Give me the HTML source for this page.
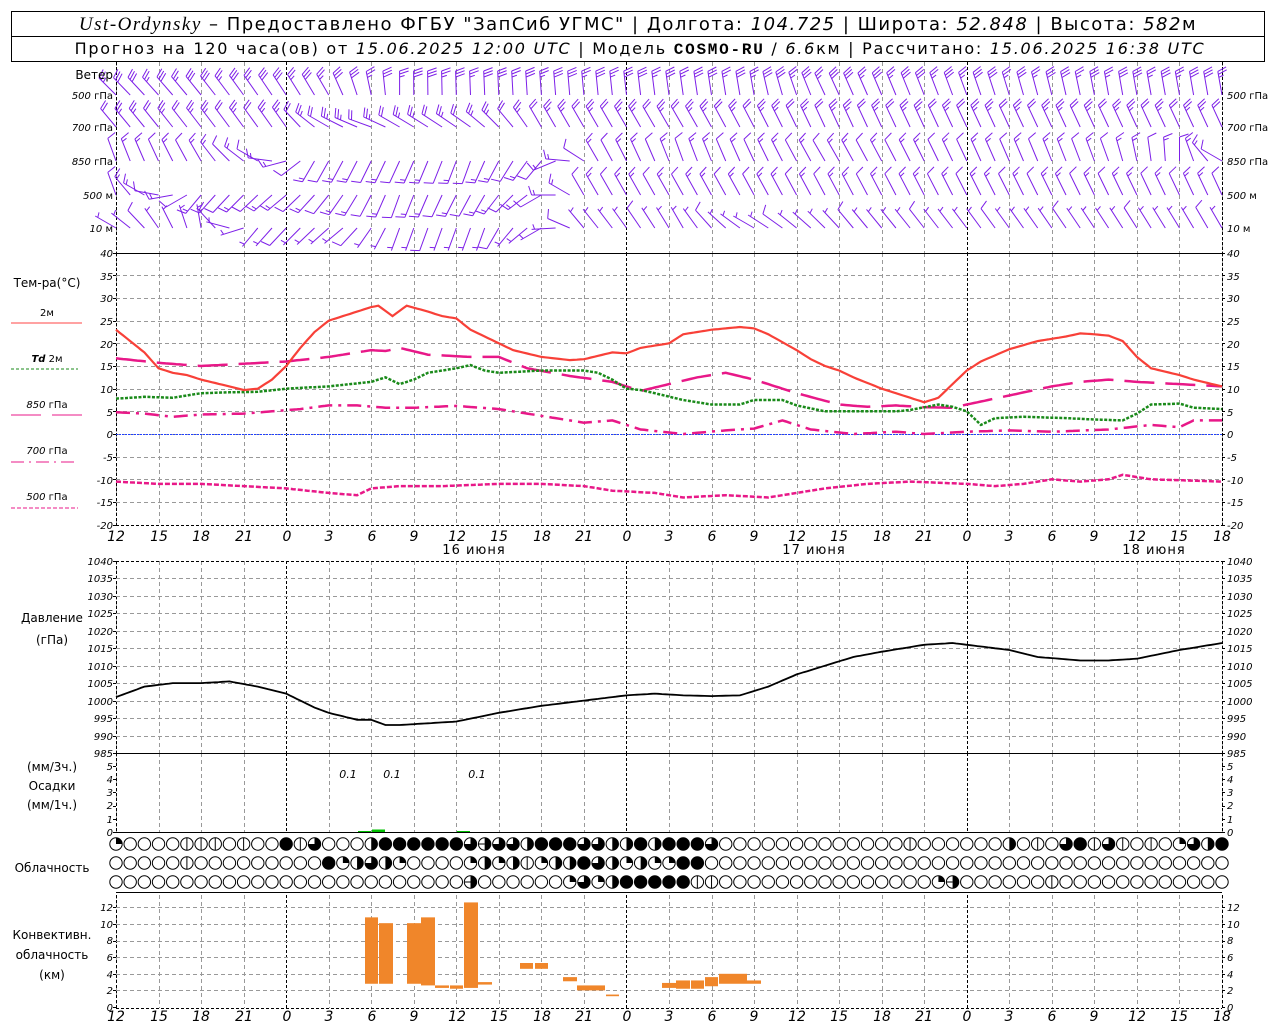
<!DOCTYPE html>
<html><head><meta charset="utf-8">
<style>
html,body{margin:0;padding:0;background:#fff;}
svg{display:block;}
text{font-family:"DejaVu Sans","Liberation Sans",sans-serif;fill:#000;}
.t{font-size:11px;font-style:italic;}
.l{font-size:12px;}
.s{font-size:10px;}
.ax{font-size:14px;font-style:italic;}
</style></head><body>
<svg id="c" width="1280" height="1024" viewBox="0 0 1280 1024" xmlns="http://www.w3.org/2000/svg">
<rect x="0" y="0" width="1280" height="1024" fill="#fff"/>
<!-- header -->
<rect x="11.5" y="11.5" width="1253" height="50" fill="none" stroke="#000"/>
<line x1="11.5" y1="36.5" x2="1264.5" y2="36.5" stroke="#000"/>
<text x="638" y="30" text-anchor="middle" style="font-size:18px;letter-spacing:1.5px"><tspan style="font-family:'Liberation Serif',serif;font-style:italic;font-size:19px">Ust-Ordynsky</tspan> – Предоставлено ФГБУ "ЗапСиб УГМС" | Долгота: <tspan style="font-style:italic">104.725</tspan> | Широта: <tspan style="font-style:italic">52.848</tspan> | Высота: <tspan style="font-style:italic">582</tspan>м</text>
<text x="640" y="54" text-anchor="middle" style="font-size:16px;letter-spacing:1.75px">Прогноз на 120 часа(ов) от <tspan style="font-style:italic">15.06.2025 12:00 UTC</tspan> | Модель <tspan style="font-family:'Liberation Mono',monospace;font-weight:bold">COSMO-RU</tspan> / <tspan style="font-style:italic">6.6</tspan>км | Рассчитано: <tspan style="font-style:italic">15.06.2025 16:38 UTC</tspan></text>

<g id="grid"></g>
<g id="data"></g>

<!-- left labels -->
<g class="l">
<text x="113" y="79" text-anchor="end">Ветер</text>
<text x="113" y="99" text-anchor="end" class="s"><tspan font-style="italic">500</tspan> гПа</text>
<text x="113" y="131" text-anchor="end" class="s"><tspan font-style="italic">700</tspan> гПа</text>
<text x="113" y="165" text-anchor="end" class="s"><tspan font-style="italic">850</tspan> гПа</text>
<text x="113" y="199" text-anchor="end" class="s"><tspan font-style="italic">500</tspan> м</text>
<text x="113" y="232" text-anchor="end" class="s"><tspan font-style="italic">10</tspan>   м</text>
<text x="1227" y="99" class="s"><tspan font-style="italic">500</tspan> гПа</text>
<text x="1227" y="131" class="s"><tspan font-style="italic">700</tspan> гПа</text>
<text x="1227" y="165" class="s"><tspan font-style="italic">850</tspan> гПа</text>
<text x="1227" y="199" class="s"><tspan font-style="italic">500</tspan> м</text>
<text x="1227" y="232" class="s"><tspan font-style="italic">10</tspan>   м</text>

<text x="47" y="287" text-anchor="middle">Тем-ра(°C)</text>
<text x="47" y="316" text-anchor="middle" class="s">2м</text>
<line x1="11" y1="323" x2="82" y2="323" stroke="#f44" stroke-width="1"/>
<text x="47" y="362" text-anchor="middle" class="s"><tspan font-style="italic" font-weight="bold">Td</tspan>  2м</text>
<line x1="11" y1="369" x2="78" y2="369" stroke="#1a8a1a" stroke-dasharray="3,2"/>
<text x="47" y="408" text-anchor="middle" class="s"><tspan font-style="italic">850</tspan> гПа</text>
<line x1="11" y1="415" x2="82" y2="415" stroke="#e81888" stroke-dasharray="30,11"/>
<text x="47" y="454" text-anchor="middle" class="s"><tspan font-style="italic">700</tspan> гПа</text>
<line x1="11" y1="462" x2="78" y2="462" stroke="#e81888" stroke-dasharray="13,5,2,5"/>
<text x="47" y="500" text-anchor="middle" class="s"><tspan font-style="italic">500</tspan> гПа</text>
<line x1="11" y1="508" x2="78" y2="508" stroke="#e81888" stroke-dasharray="4,2"/>

<text x="52" y="622" text-anchor="middle">Давление</text>
<text x="52" y="644" text-anchor="middle">(гПа)</text>
<text x="52" y="771" text-anchor="middle">(мм/3ч.)</text>
<text x="52" y="790" text-anchor="middle">Осадки</text>
<text x="52" y="809" text-anchor="middle">(мм/1ч.)</text>
<text x="52" y="872" text-anchor="middle">Облачность</text>
<text x="52" y="939" text-anchor="middle">Конвективн.</text>
<text x="52" y="959" text-anchor="middle">облачность</text>
<text x="52" y="979" text-anchor="middle">(км)</text>
</g>

<g class="s" font-style="italic">
<text x="113" y="257" text-anchor="end">40</text><text x="113" y="280" text-anchor="end">35</text><text x="113" y="302" text-anchor="end">30</text><text x="113" y="325" text-anchor="end">25</text><text x="113" y="348" text-anchor="end">20</text><text x="113" y="370" text-anchor="end">15</text><text x="113" y="393" text-anchor="end">10</text><text x="113" y="416" text-anchor="end">5</text><text x="113" y="438" text-anchor="end">0</text><text x="113" y="461" text-anchor="end">-5</text><text x="113" y="484" text-anchor="end">-10</text><text x="113" y="506" text-anchor="end">-15</text><text x="113" y="529" text-anchor="end">-20</text>
<text x="1227" y="257">40</text><text x="1227" y="280">35</text><text x="1227" y="302">30</text><text x="1227" y="325">25</text><text x="1227" y="348">20</text><text x="1227" y="370">15</text><text x="1227" y="393">10</text><text x="1227" y="416">5</text><text x="1227" y="438">0</text><text x="1227" y="461">-5</text><text x="1227" y="484">-10</text><text x="1227" y="506">-15</text><text x="1227" y="529">-20</text>
<text x="113" y="565" text-anchor="end">1040</text><text x="113" y="582" text-anchor="end">1035</text><text x="113" y="600" text-anchor="end">1030</text><text x="113" y="617" text-anchor="end">1025</text><text x="113" y="635" text-anchor="end">1020</text><text x="113" y="652" text-anchor="end">1015</text><text x="113" y="670" text-anchor="end">1010</text><text x="113" y="687" text-anchor="end">1005</text><text x="113" y="705" text-anchor="end">1000</text><text x="113" y="722" text-anchor="end">995</text><text x="113" y="740" text-anchor="end">990</text><text x="113" y="757" text-anchor="end">985</text>
<text x="1227" y="565">1040</text><text x="1227" y="582">1035</text><text x="1227" y="600">1030</text><text x="1227" y="617">1025</text><text x="1227" y="635">1020</text><text x="1227" y="652">1015</text><text x="1227" y="670">1010</text><text x="1227" y="687">1005</text><text x="1227" y="705">1000</text><text x="1227" y="722">995</text><text x="1227" y="740">990</text><text x="1227" y="757">985</text>
<text x="113" y="770" text-anchor="end">5</text><text x="113" y="783" text-anchor="end">4</text><text x="113" y="796" text-anchor="end">3</text><text x="113" y="809" text-anchor="end">2</text><text x="113" y="823" text-anchor="end">1</text><text x="113" y="836" text-anchor="end">0</text>
<text x="1227" y="770">5</text><text x="1227" y="783">4</text><text x="1227" y="796">3</text><text x="1227" y="809">2</text><text x="1227" y="823">1</text><text x="1227" y="836">0</text>
<text x="113" y="911" text-anchor="end">12</text><text x="113" y="928" text-anchor="end">10</text><text x="113" y="944" text-anchor="end">8</text><text x="113" y="961" text-anchor="end">6</text><text x="113" y="978" text-anchor="end">4</text><text x="113" y="994" text-anchor="end">2</text><text x="113" y="1011" text-anchor="end">0</text>
<text x="1227" y="911">12</text><text x="1227" y="928">10</text><text x="1227" y="944">8</text><text x="1227" y="961">6</text><text x="1227" y="978">4</text><text x="1227" y="994">2</text><text x="1227" y="1011">0</text>
</g>
<g class="t" font-size="11">
<text x="348" y="778" text-anchor="middle">0.1</text><text x="392" y="778" text-anchor="middle">0.1</text><text x="477" y="778" text-anchor="middle">0.1</text>
</g>
<g class="ax" text-anchor="middle">
<text x="116" y="541">12</text><text x="159" y="541">15</text><text x="201" y="541">18</text><text x="244" y="541">21</text><text x="287" y="541">0</text><text x="329" y="541">3</text><text x="372" y="541">6</text><text x="414" y="541">9</text><text x="457" y="541">12</text><text x="499" y="541">15</text><text x="542" y="541">18</text><text x="584" y="541">21</text><text x="627" y="541">0</text><text x="669" y="541">3</text><text x="712" y="541">6</text><text x="754" y="541">9</text><text x="797" y="541">12</text><text x="839" y="541">15</text><text x="882" y="541">18</text><text x="924" y="541">21</text><text x="967" y="541">0</text><text x="1009" y="541">3</text><text x="1052" y="541">6</text><text x="1094" y="541">9</text><text x="1137" y="541">12</text><text x="1179" y="541">15</text><text x="1222" y="541">18</text>
</g>
<g style="font-size:13px;letter-spacing:1px" text-anchor="middle">
<text x="474" y="554">16 июня</text><text x="814" y="554">17 июня</text><text x="1154" y="554">18 июня</text>
</g>
<g class="ax" text-anchor="middle">
<text x="116" y="1021">12</text><text x="159" y="1021">15</text><text x="201" y="1021">18</text><text x="244" y="1021">21</text><text x="287" y="1021">0</text><text x="329" y="1021">3</text><text x="372" y="1021">6</text><text x="414" y="1021">9</text><text x="457" y="1021">12</text><text x="499" y="1021">15</text><text x="542" y="1021">18</text><text x="584" y="1021">21</text><text x="627" y="1021">0</text><text x="669" y="1021">3</text><text x="712" y="1021">6</text><text x="754" y="1021">9</text><text x="797" y="1021">12</text><text x="839" y="1021">15</text><text x="882" y="1021">18</text><text x="924" y="1021">21</text><text x="967" y="1021">0</text><text x="1009" y="1021">3</text><text x="1052" y="1021">6</text><text x="1094" y="1021">9</text><text x="1137" y="1021">12</text><text x="1179" y="1021">15</text><text x="1222" y="1021">18</text>
</g>
</svg>
<script>
(function(){
var NS="http://www.w3.org/2000/svg";
var G=document.getElementById('grid'),D=document.getElementById('data');
function el(p,t,a){var e=document.createElementNS(NS,t);for(var k in a)e.setAttribute(k,a[k]);p.appendChild(e);return e;}
function X(h){return 116+h*14.1795;}
var L=116,R=1222;
var secs=[[62,253],[253,525],[561,753],[753,832],[895,1008]];
for(var h=0;h<=78;h+=3){var x=Math.round(X(h))+0.5;var mid=(h%24==12);
 secs.forEach(function(s){el(G,'line',{x1:x,y1:s[0],x2:x,y2:s[1],stroke:mid?'#000':'#999','stroke-dasharray':mid?'3,2':'4,3','stroke-width':1});});}
[L,R].forEach(function(x){secs.forEach(function(s){el(G,'line',{x1:x+.5,y1:s[0],x2:x+.5,y2:s[1],stroke:'#000','stroke-dasharray':'3,2'});});});
function hl(y,dash){el(G,'line',{x1:L,y1:y+.5,x2:R,y2:y+.5,stroke:dash?'#999':'#000','stroke-dasharray':dash?'4,3':'none'});}
function ticks(y){el(G,'line',{x1:L-3,y1:y+.5,x2:L,y2:y+.5,stroke:'#000'});el(G,'line',{x1:R,y1:y+.5,x2:R+3,y2:y+.5,stroke:'#000'});}
function TY(t){return 434-t*4.533;}
for(var t=35;t>=-15;t-=5){hl(Math.round(TY(t)),1);}
for(var t=40;t>=-20;t-=5)ticks(Math.round(TY(t)));
hl(253,0);
el(G,'line',{x1:L,y1:525.5,x2:R,y2:525.5,stroke:'#000','stroke-dasharray':'3,2'});
el(G,'line',{x1:L,y1:434.5,x2:R,y2:434.5,stroke:'#2040ff','stroke-dasharray':'2,1'});
function PY(p){return 561+(1040-p)*3.49;}
for(var p=1035;p>=990;p-=5)hl(Math.round(PY(p)),1);
for(var p=1040;p>=985;p-=5)ticks(Math.round(PY(p)));
el(G,'line',{x1:L,y1:561.5,x2:R,y2:561.5,stroke:'#000','stroke-dasharray':'3,2'});
hl(753,0);hl(832,0);hl(892,0);
for(var i=0;i<=5;i++)ticks(Math.round(832-i*13.2));
function CY(k){return 1007-k*8.3;}
for(var k=2;k<=12;k+=2)hl(Math.round(CY(k)),1);
for(var k=0;k<=12;k+=2)ticks(Math.round(CY(k)));
el(G,'line',{x1:L,y1:1008.5,x2:R,y2:1008.5,stroke:'#000','stroke-dasharray':'3,2'});

function interp(kf,h){for(var i=0;i<kf.length-1;i++){if(h>=kf[i][0]&&h<=kf[i+1][0]){var a=kf[i],b=kf[i+1];return a[1]+(b[1]-a[1])*(h-a[0])/(b[0]-a[0]);}}return kf[kf.length-1][1];}
function curve(kf,fy,attrs){var pts=[];for(var h=0;h<=78;h+=0.25){pts.push(X(h).toFixed(1)+','+fy(interp(kf,h)).toFixed(1));}attrs.points=pts.join(' ');attrs.fill='none';el(D,'polyline',attrs);}
var T2=[[0,23],[2,18],[3,14.5],[4,13.5],[5,13],[6,12],[8,10.5],[9,9.7],[10,10],[11,12],[12,15],[13,19],[14,22.5],[15,25],[17,27],[18,28],[18.5,28.3],[19.5,26],[20.5,28.3],[22,27],[23,26],[24,25.5],[25,23],[27,20],[28,18.5],[30,17],[32,16.3],[33,16.5],[35,18],[36,17.8],[37,19],[38,19.5],[39,20],[40,22],[42,23],[44,23.6],[45,23.3],[46,22],[48,18.5],[49,16.5],[50,15],[51,14],[52,12.5],[54,10],[56,8],[57,7],[58,8],[59,11],[60,14],[61,16],[63,18.7],[65,20.5],[67,21.5],[68,22.2],[69,22],[70,21.7],[71,20.5],[72,17],[73,14.5],[75,13],[76,12],[78,10.5]];
var TD=[[0,7.8],[2,8.2],[4,8],[6,9],[8,9.2],[10,9.3],[12,10],[15,10.5],[18,11.5],[19,12.5],[20,11],[21,12],[22,13.5],[24,14.5],[25,15.2],[26,14],[27,13.5],[30,14],[33,14],[34,13.5],[35,12],[36,10],[37,9.7],[38,9],[40,7.5],[42,6.5],[44,6.5],[45,7.5],[47,7.5],[48,6.3],[50,5],[55,5],[56,5.3],[58,6.5],[59,6],[60,5],[61,2],[62,3.5],[64,3.8],[67,3.5],[69,3.2],[71,3],[72,4.5],[73,6.5],[75,6.7],[76,5.8],[78,5.5]];
var T850=[[0,16.7],[3,15.7],[6,15],[9,15.5],[12,16],[15,17],[18,18.5],[19,18.3],[20,19],[22,17.5],[25,17],[27,17],[29,14.5],[32,12.8],[35,11.5],[37,9.5],[39,11],[41,12.5],[43,13.5],[45,12],[48,9],[51,6.5],[53,6],[55,6.3],[57,5.9],[59,5.8],[60,6.5],[63,8.5],[66,10.5],[68,11.5],[70,12],[72,11.5],[75,11],[78,10.5]];
var T700=[[0,4.8],[2,4.5],[4,3.8],[6,4.3],[9,4.5],[11,5],[13,5.5],[15,6.3],[17,6.3],[19,5.8],[21,5.8],[24,6.2],[27,5.5],[30,4],[33,2.5],[35,3],[37,1],[40,0],[43,0.8],[45,1.2],[47,3],[49,1],[52,0],[55,0.5],[57,0],[60,0.5],[63,0.8],[66,0.5],[70,1],[73,2],[75,1.5],[76,3],[77,3]];
var T500=[[0,-10.5],[3,-11],[6,-11],[9,-11.5],[12,-12],[15,-13],[17,-13.5],[18,-12],[20,-11.5],[23,-11.5],[27,-11],[30,-11],[33,-11.5],[35,-12.5],[38,-13],[40,-14],[43,-13.5],[46,-14],[48,-13],[50,-12],[53,-11],[56,-10.5],[60,-11],[62,-11.5],[64,-11],[66,-10],[68,-10.5],[70,-10],[71,-9],[73,-10],[78,-10.5]];
curve(T500,TY,{stroke:'#e81888','stroke-width':2.5,'stroke-dasharray':'5,2'});
curve(T700,TY,{stroke:'#e81888','stroke-width':2.5,'stroke-dasharray':'14,6,3,6'});
curve(T850,TY,{stroke:'#e81888','stroke-width':2.5,'stroke-dasharray':'30,11'});
curve(TD,TY,{stroke:'#1a8a1a','stroke-width':2.5,'stroke-dasharray':'3,1.5'});
curve(T2,TY,{stroke:'#f84038','stroke-width':2.2});
var P=[[0,1001],[2,1004],[4,1005],[6,1005],[8,1005.5],[10,1004],[12,1002],[14,998],[15,996.5],[17,994.5],[18,994.5],[19,993],[20,993],[22,993.5],[24,994],[27,996.5],[30,998.5],[33,1000],[36,1001.5],[38,1002],[40,1001.5],[42,1001.3],[44,1001.5],[46,1004],[48,1007.5],[50,1010],[52,1012.5],[54,1014],[57,1016],[59,1016.5],[61,1015.5],[63,1014.5],[65,1012.5],[68,1011.5],[70,1011.5],[72,1012],[75,1014.5],[78,1016.5]];
curve(P,PY,{stroke:'#000','stroke-width':1.8});
[[358,371,831],[372,385,829.5],[457,470,831]].forEach(function(b){el(D,'rect',{x:b[0],y:b[2],width:b[1]-b[0],height:832-b[2],fill:'#00c000'});});
[[365,378,2.8,10.8],[379,393,2.8,10.1],[407,421,2.8,10.1],[421,435,2.6,10.8],[435,449,2.3,2.6],[450,463,2.2,2.6],[464,478,2.3,12.6],[478,492,2.7,3.0],
 [520,533,4.6,5.3],[535,548,4.6,5.3],[563,577,3.1,3.6],[577,605,2.0,2.6],[606,619,1.3,1.5],
 [662,676,2.3,2.9],[676,690,2.2,3.2],[691,704,2.2,3.2],[705,718,2.5,3.6],[719,747,2.8,4.0],[747,761,2.8,3.2]].forEach(function(b){
 el(D,'rect',{x:b[0],y:CY(b[3]),width:b[1]-b[0],height:CY(b[2])-CY(b[3]),fill:'#f0862a'});});
var rows=[
"20000111010081600048888886H6648886644848886000000000000010000004010681610102648H",
"00000100000000082464200002424124486424228800000000000000000000000000000000000000",
"0000000000000000000000000H000000262488888110000000000000002H000000100000000000000"];
var ry=[844,863,882];
rows.forEach(function(r,ri){for(var h=0;h<=78;h++){var c=r.charAt(h)||'0';var cx=X(h),cy=ry[ri],rr=6.2;
 var g=el(D,'g',{});
 if(c=='8'){el(g,'circle',{cx:cx,cy:cy,r:rr,fill:'#000',stroke:'#000'});continue;}
 el(g,'circle',{cx:cx,cy:cy,r:rr,fill:'#fff',stroke:'#000','stroke-width':1});
 if(c=='1'){el(g,'line',{x1:cx,y1:cy-rr,x2:cx,y2:cy+rr,stroke:'#000'});}
 if(c=='2'){el(g,'path',{d:'M'+cx+' '+cy+' L'+cx+' '+(cy-rr)+' A'+rr+' '+rr+' 0 0 1 '+(cx+rr)+' '+cy+' Z',fill:'#000'});}
 if(c=='4'||c=='H'){el(g,'path',{d:'M'+cx+' '+(cy-rr)+' A'+rr+' '+rr+' 0 0 1 '+cx+' '+(cy+rr)+' Z',fill:'#000'});if(c=='H')el(g,'line',{x1:cx-rr,y1:cy,x2:cx,y2:cy,stroke:'#000'});}
 if(c=='6'){el(g,'path',{d:'M'+cx+' '+cy+' L'+cx+' '+(cy-rr)+' A'+rr+' '+rr+' 0 1 1 '+(cx-rr)+' '+cy+' Z',fill:'#000'});}
}});
// wind barbs (angles unwrapped, >360 fine)
var W=[
 [95,[[0,315],[15,330],[20,360],[45,350],[50,335],[60,340],[70,350],[78,350]],30],
 [127,[[0,320],[12,325],[15,300],[18,290],[20,300],[25,305],[28,320],[30,330],[40,330],[50,335],[78,335]],25],
 [161,[[0,340],[6,330],[10,300],[14,210],[25,200],[30,220],[34,330],[40,340],[50,330],[70,340],[75,360],[78,300]],15],
 [195,[[0,340],[6,220],[12,230],[20,200],[26,210],[30,240],[33,330],[78,335]],15],
 [228,[[0,300],[6,350],[10,220],[16,230],[20,200],[26,200],[30,240],[33,320],[40,330],[45,300],[52,320],[78,330]],8]];
var pc='#7d1fe8';
W.forEach(function(w){for(var h=0;h<=78;h++){var d=interp(w[1],h)*Math.PI/180;var sp=w[2]+((h*7)%5)-2;
 var x=X(h),y=w[0],Ln=24;var ux=Math.sin(d),uy=-Math.cos(d);
 var ex=x+ux*Ln,ey=y+uy*Ln;var s='M'+x.toFixed(1)+' '+y+' L'+ex.toFixed(1)+' '+ey.toFixed(1);
 var px=-uy,py=ux;
 var n=Math.floor(sp/10),half=(sp%10)>=5;var pos=0;
 for(var i=0;i<n;i++){var bx=ex-ux*pos,by=ey-uy*pos;s+=' M'+bx.toFixed(1)+' '+by.toFixed(1)+' l'+((px*9+ux*3)).toFixed(1)+' '+((py*9+uy*3)).toFixed(1);pos+=3;}
 if(half){var bx=ex-ux*(pos+(n?0:3)),by=ey-uy*(pos+(n?0:3));s+=' M'+bx.toFixed(1)+' '+by.toFixed(1)+' l'+((px*5+ux*1.5)).toFixed(1)+' '+((py*5+uy*1.5)).toFixed(1);}
 el(D,'path',{d:s,stroke:pc,'stroke-width':1,fill:'none'});}});
})();
</script>
</body></html>
